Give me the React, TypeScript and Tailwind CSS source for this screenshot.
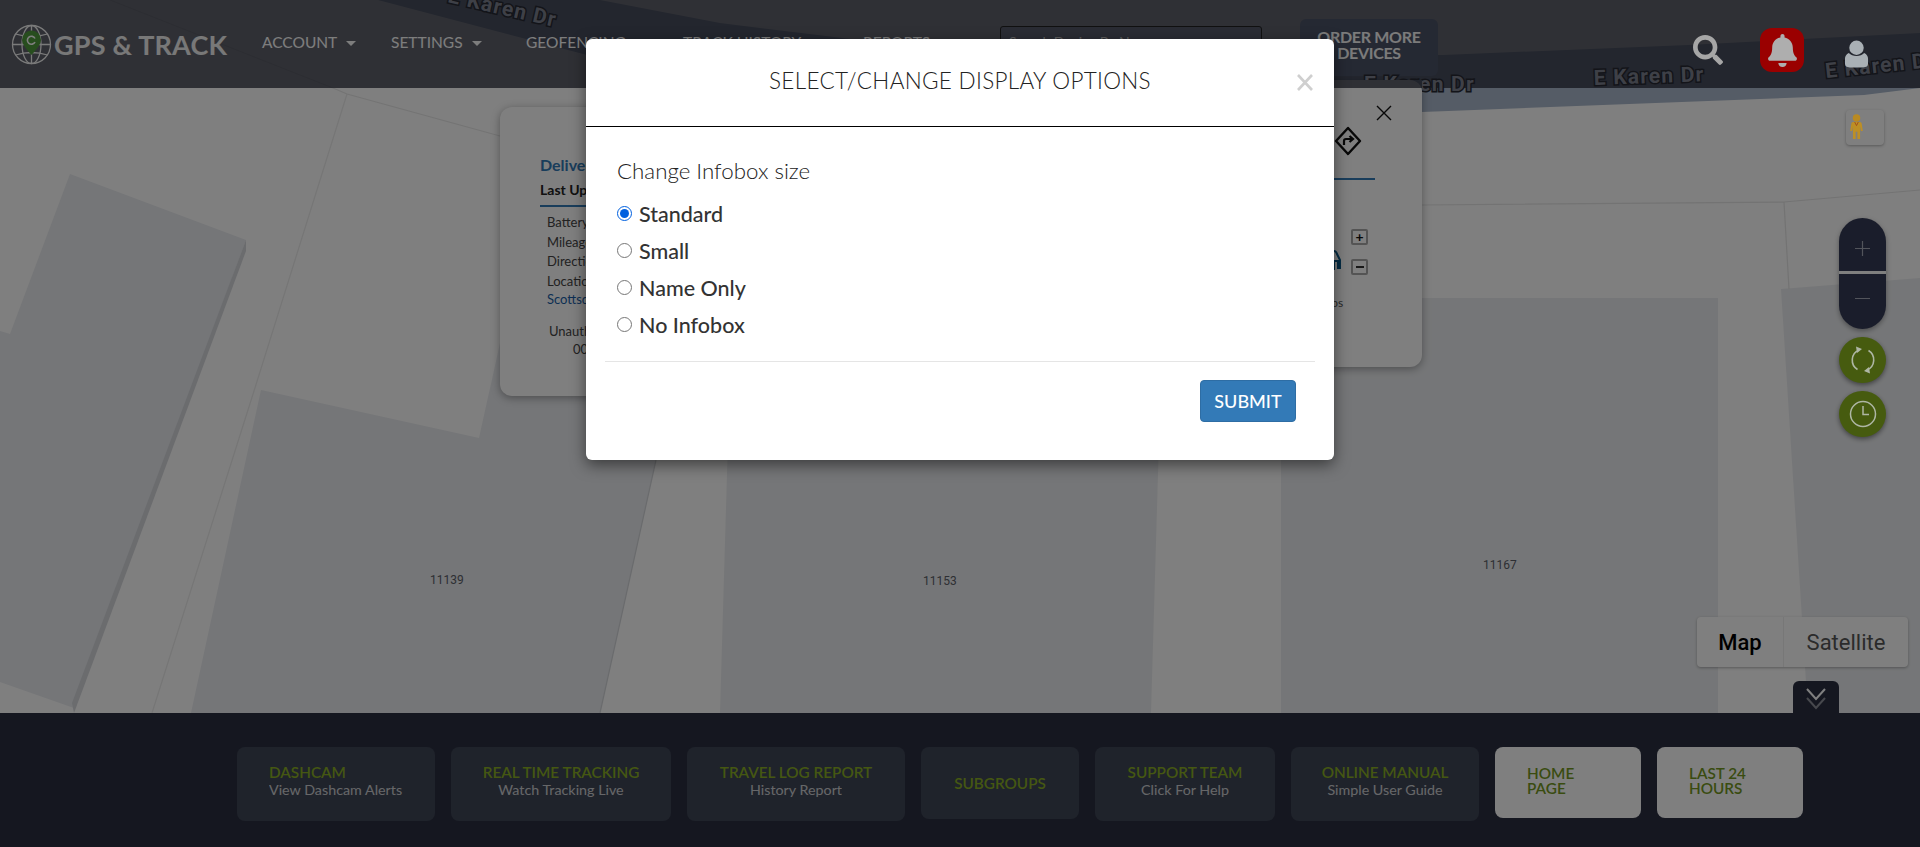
import React from "react";
import { FaSearch, FaBell } from "react-icons/fa";

const roadLabel = "fill-[#7d818f] text-[21px] font-bold tracking-[1.2px] [paint-order:stroke] [stroke:#262933] [stroke-width:3px]";

function MapCanvas() {
  return (
    <svg className="absolute inset-0 w-full h-full" viewBox="0 0 1920 713" preserveAspectRatio="none">
      <rect width="1920" height="713" fill="#fefefe" />
      <path d="M378 0 L587 55 L800 100 L1000 118 L1422 112 L1864 95 L1920 88 L1920 33 L1688 45 L1443 55 L1200 58 L900 45 L720 23 L600 0 Z" fill="#aab8cc" />
      <path d="M70 174 L246 240 L74 708 L0 682 L0 331 L10 334 Z" fill="#eaecf0" />
      <path d="M246 240 L246 251 L74 713 L72 703 Z" fill="#d6d8dd" />
      <path d="M261 390 L479 438 L500 343 L682 343 L600 713 L191 713 Z" fill="#eaecf0" />
      <path d="M728 440 L1159 440 L1151 713 L720 713 Z" fill="#ebedf0" />
      <path d="M1281 298 L1718 298 L1718 713 L1281 713 Z" fill="#ebedf0" />
      <path d="M1781 289 L1920 278 L1920 713 L1808 713 Z" fill="#ebedf0" />
      <path d="M110 0 L333 88 L347 94 L500 136" fill="none" stroke="#e8e8e8" strokeWidth="1.2" />
      <path d="M347 94 L254 391 L152 713" fill="none" stroke="#ececec" strokeWidth="1.2" />
      <path d="M656 460 L600 713" fill="none" stroke="#d4d6da" strokeWidth="1.2" />
      <path d="M1421 205 L1784 202 L1920 190 M1784 202 L1789 289" fill="none" stroke="#e6e6e6" strokeWidth="1.2" />
      <g className="fill-[#5c5f68] text-[12px]" style={{ fontFamily: "Roboto, sans-serif" }}>
        <text x="430" y="584">11139</text>
        <text x="923" y="585">11153</text>
        <text x="1483" y="569">11167</text>
      </g>
    </svg>
  );
}

function RoadLabels() {
  return (
    <svg className="absolute top-0 left-0" width="1920" height="120" viewBox="0 0 1920 120" style={{ fontFamily: "Roboto, sans-serif" }}>
      <defs>
        <clipPath id="labels-clip">
          <path clipRule="evenodd" d="M0 0 H1920 V120 H0 Z M1060 80 H1422 V120 H1060 Z" />
        </clipPath>
      </defs>
      <g clipPath="url(#labels-clip)">
        <text x="447" y="2" transform="rotate(13 447 2)" className={roadLabel}>E Karen Dr</text>
        <text x="1364" y="91" className={roadLabel}>E Karen Dr</text>
        <text x="1594" y="85" transform="rotate(-2 1594 85)" className={roadLabel}>E Karen Dr</text>
        <text x="1826" y="78" transform="rotate(-6 1826 78)" className={roadLabel}>E Karen Dr</text>
      </g>
    </svg>
  );
}

function LeftPanel() {
  return (
    <div className="absolute left-[500px] top-[107px] w-[320px] h-[289px] bg-[#fefefe] rounded-xl shadow-[0_2px_8px_rgba(0,0,0,0.35)] pl-10 pt-[47px] font-['Lato',sans-serif]">
      <div className="text-[16px] leading-[22px] font-bold text-[#337ab7]">Delivery Van 12</div>
      <div className="w-[200px] mt-[4px] pb-[5px] text-[14px] leading-[20px] font-bold text-[#222] border-b-2 border-[#337ab7]">Last Updated</div>
      <div className="pl-[7px] pt-[6px] text-[13px] text-[#444]">
        <div className="leading-[19.6px]">Battery</div>
        <div className="leading-[19.6px]">Mileage</div>
        <div className="leading-[19.6px]">Direction</div>
        <div className="leading-[19.6px]">Location</div>
        <div className="leading-[16px] text-[#1a5fa8]">Scottsdale</div>
      </div>
      <div className="pl-[9px] pt-[15px] text-[13px] leading-[18px] text-[#444]">
        <div>Unauthorized</div>
        <div className="pl-[24px]">00</div>
      </div>
    </div>
  );
}

function RightPanel() {
  return (
    <div className="absolute left-[1060px] top-[80px] w-[362px] h-[287px] bg-[#fefefe] rounded-xl shadow-[0_2px_8px_rgba(0,0,0,0.35)] font-['Lato',sans-serif]">
      <svg className="absolute left-[316px] top-[25px]" width="16" height="16" viewBox="0 0 16 16">
        <path d="M1 1 L15 15 M15 1 L1 15" stroke="#111" strokeWidth="1.4" fill="none" />
      </svg>
      <svg className="absolute left-[274px] top-[46px]" width="28" height="30" viewBox="0 0 28 30">
        <path d="M14 2 L26 15 L14 28 L2 15 Z" stroke="#111" strokeWidth="2.4" fill="none" strokeLinejoin="round" />
        <path d="M10 19 V15 Q10 13 12 13 H18 M15.5 10 L19 13 L15.5 16" stroke="#111" strokeWidth="2.2" fill="none" />
      </svg>
      <div className="absolute left-[230px] top-[98px] w-[85px] h-[2px] bg-[#337ab7]" />
      <svg className="absolute left-[260px] top-[168px]" width="24" height="24" viewBox="0 0 24 24">
        <path d="M8 3 H14 Q16 3 17 6 L20 12 V20 H18 V13 H14 V21 H8 Z" stroke="#0b5a8a" strokeWidth="2" fill="none" />
      </svg>
      <div className="absolute left-[291px] top-[149px] w-[17px] h-[16px] border-2 border-[#a8a8a8] rounded-[2px] flex items-center justify-center text-[#111] text-[14px] leading-none font-bold">+</div>
      <div className="absolute left-[291px] top-[179px] w-[17px] h-[16px] border-2 border-[#a8a8a8] rounded-[2px] flex items-center justify-center"><span className="block w-[8px] h-[2px] bg-[#333]" /></div>
      <div className="absolute left-[254px] top-[215px] text-[12px] leading-4 text-[#555]">Stops</div>
    </div>
  );
}

function Controls() {
  return (
    <>
      <div className="absolute left-[1846px] top-[110px] w-[38px] h-[35px] bg-white rounded-sm shadow-[0_1px_3px_rgba(0,0,0,0.3)] pl-[3px] pt-[4px]">
        <svg className="relative z-10" width="15" height="25" viewBox="0 0 14 28">
          <circle cx="7" cy="4.5" r="4.2" fill="#b98a22" />
          <path d="M3 9 H11 Q13 9 13 12 L14 19 H12 L11 14 V28 H8 V20 H6 V28 H3 V14 L2 19 H0 L1 12 Q1 9 3 9 Z" fill="#bd8f24" />
          <path d="M5 9 L7 13 L9 9" fill="none" stroke="#a04a1c" strokeWidth="1" />
        </svg>
      </div>
      <div className="absolute left-[1839px] top-[218px] w-[47px] h-[111px] rounded-full bg-[#343a56] shadow-[0_2px_5px_rgba(0,0,0,0.35)] flex flex-col overflow-hidden">
        <div className="h-[53px] flex items-center justify-center pt-[8px]">
          <svg width="15" height="15" viewBox="0 0 15 15"><path d="M7.5 0 V15 M0 7.5 H15" stroke="#a4a8b6" strokeWidth="1.2" /></svg>
        </div>
        <div className="h-[3px] bg-[#fefefe]" />
        <div className="flex-1 flex items-center justify-center pb-[6px]">
          <svg width="15" height="3" viewBox="0 0 15 3"><path d="M0 1.5 H15" stroke="#a4a8b6" strokeWidth="1.2" /></svg>
        </div>
      </div>
      <div className="absolute left-[1839px] top-[337px] w-[47px] h-[46px] rounded-full bg-[#8cb61e] shadow-[0_2px_5px_rgba(0,0,0,0.45)] flex items-center justify-center">
        <svg className="relative z-10" width="30" height="30" viewBox="0 0 30 30" fill="none">
          <path d="M11 5 A11 11 0 0 0 9.5 24.5" stroke="#aeb6a4" strokeWidth="1.6" />
          <path d="M19 25 A11 11 0 0 0 20.5 5.5" stroke="#aeb6a4" strokeWidth="1.6" />
          <path d="M8 1.5 L14 4 L9 8 Z M22 28.5 L16 26 L21 22 Z" fill="#aeb6a4" />
        </svg>
      </div>
      <div className="absolute left-[1839px] top-[391px] w-[47px] h-[46px] rounded-full bg-[#8cb61e] shadow-[0_2px_5px_rgba(0,0,0,0.45)] flex items-center justify-center">
        <svg className="relative z-10" width="28" height="28" viewBox="0 0 28 28" fill="none">
          <circle cx="14" cy="14" r="12.5" stroke="#aeb6a4" strokeWidth="1.5" />
          <path d="M14 6 V14.5 H20" stroke="#aeb6a4" strokeWidth="1.5" />
        </svg>
      </div>
      <div className="absolute left-[1697px] top-[617px] w-[211px] h-[50px] bg-white rounded-sm shadow-[0_1px_3px_rgba(0,0,0,0.3)] flex font-['Roboto',sans-serif] text-[22px]">
        <div className="w-[87px] flex items-center justify-center font-medium text-black border-r border-[#eee]">Map</div>
        <div className="flex-1 flex items-center justify-center text-[#565656]">Satellite</div>
      </div>
      <div className="absolute left-[1793px] top-[681px] w-[46px] h-[32px] bg-[#2a2f40] rounded-t-md flex justify-center pt-[7px]">
        <svg width="22" height="22" viewBox="0 0 22 22" fill="none">
          <path d="M2 10 L11 20 L20 10" stroke="#8e919a" strokeWidth="2" />
          <path d="M2 1 L11 11 L20 1" stroke="#fff" strokeWidth="2" />
        </svg>
      </div>
    </>
  );
}

function Logo() {
  return (
    <div className="flex items-center ml-[11px] w-[241px]">
      <svg width="41" height="41" viewBox="0 0 41 41" fill="none" stroke="#f5f5f5" strokeWidth="1.3">
        <circle cx="20.5" cy="20.5" r="19" />
        <ellipse cx="20.5" cy="20.5" rx="9.5" ry="19" />
        <path d="M20.5 1.5 V39.5 M1.5 20.5 H39.5 M4.5 10 Q20.5 15 36.5 10 M4.5 31 Q20.5 26 36.5 31" />
        <path d="M20.5 31 Q11 21 11 16 A9.5 9.5 0 0 1 30 16 Q30 21 20.5 31 Z" fill="#4f9a3c" stroke="none" />
        <path d="M24 14.5 A4 4 0 1 0 24 18" stroke="#ffffff" strokeWidth="1.6" />
      </svg>
      <span className="ml-[2px] text-[27px] leading-none font-bold font-['Lato',sans-serif] text-[#f0f0f0] tracking-[0.2px] whitespace-nowrap">GPS &amp; TRACK</span>
    </div>
  );
}

function NavItem({ label, caret, w }: { label: string; caret?: boolean; w: string }) {
  return (
    <div className={`flex items-center shrink-0 ${w} text-[15.5px] text-[#fbfbfb] whitespace-nowrap pb-[2px]`}>
      <span>{label}</span>
      {caret && <span className="ml-[9px] w-0 h-0 border-x-[5px] border-x-transparent border-t-[5px] border-t-[#fbfbfb]" />}
    </div>
  );
}

function Header() {
  return (
    <header className="absolute top-0 inset-x-0 h-[88px] bg-[#1e212f]/[0.71] flex items-center font-['Lato',sans-serif]">
      <Logo />
      <div className="flex items-center ml-[10px]">
        <NavItem label="ACCOUNT" caret w="w-[129px]" />
        <NavItem label="SETTINGS" caret w="w-[135px]" />
        <NavItem label="GEOFENCING" w="w-[157px]" />
        <NavItem label="TRACK HISTORY" w="w-[180px]" />
        <NavItem label="REPORTS" w="w-[137px]" />
      </div>
      <div className="w-[262px] h-[42px] mt-[5px] border border-[#222] rounded-[3px] bg-[#555969] flex items-center px-2 pb-[10px] text-[14px] text-[#bbb] shrink-0">Search Device By Name</div>
      <div className="ml-[38px] w-[138px] h-[57px] mt-[7px] pb-[6px] rounded-md bg-[#4b5266] flex flex-col items-center justify-center text-[16px] leading-[16px] font-bold text-[#f6f6f6] tracking-[-0.3px] shrink-0">
        <span>ORDER MORE</span>
        <span>DEVICES</span>
      </div>
      <FaSearch className="relative z-10 ml-[255px] mt-[12px] shrink-0 text-[#a6a6a6]" size={30} />
      <div className="relative z-10 ml-[37px] mt-[12px] w-[44px] h-[44px] rounded-xl bg-[#9a0000] flex items-center justify-center shrink-0">
        <FaBell className="text-[#aeaeae]" size={33} />
      </div>
      <svg className="relative z-10 ml-[40px] mt-[19px] shrink-0" width="25" height="28" viewBox="0 0 26 28">
        <circle cx="13" cy="7.5" r="7.5" fill="#a9b0b5" />
        <path d="M5 13 Q8 16 13 16 Q18 16 21 13 Q25 15 25 19 V24 Q25 28 20 28 H6 Q1 28 1 24 V19 Q1 15 5 13 Z" fill="#a9b0b5" />
      </svg>
    </header>
  );
}

function Tile({ title, sub, w, h, align, light }: { title: React.ReactNode; sub?: string; w: string; h: string; align?: string; light?: boolean }) {
  return (
    <div className={`${w} ${h} shrink-0 rounded-lg flex flex-col justify-center px-8 ${sub ? "pb-[7px]" : ""} ${light ? "pb-[4px]" : ""} ${align ?? "items-center text-center"} ${light ? "bg-white text-[#74981f]" : "bg-[#3f4656] text-[#8aaf24]"}`}>
      <div className={`text-[15.3px] font-semibold whitespace-nowrap ${light ? "leading-[15px]" : "leading-[17px]"}`}>{title}</div>
      {sub && <div className="text-[14.3px] leading-[17px] text-[#fdfdfd] opacity-75 whitespace-nowrap">{sub}</div>}
    </div>
  );
}

function Footer() {
  return (
    <footer className="h-[134px] shrink-0 bg-[#2a2f40] flex justify-start items-start pt-[34px] pl-[237px] gap-4 font-['Lato',sans-serif]">
      <Tile title="DASHCAM" sub="View Dashcam Alerts" w="w-[198px]" h="h-[74px]" align="items-start text-left" />
      <Tile title="REAL TIME TRACKING" sub="Watch Tracking Live" w="w-[220px]" h="h-[74px]" />
      <Tile title="TRAVEL LOG REPORT" sub="History Report" w="w-[218px]" h="h-[74px]" />
      <Tile title="SUBGROUPS" w="w-[158px]" h="h-[72px]" />
      <Tile title="SUPPORT TEAM" sub="Click For Help" w="w-[180px]" h="h-[74px]" />
      <Tile title="ONLINE MANUAL" sub="Simple User Guide" w="w-[188px]" h="h-[74px]" />
      <Tile title={<>HOME<br />PAGE</>} w="w-[146px]" h="h-[71px]" align="items-start text-left" light />
      <Tile title={<>LAST 24<br />HOURS</>} w="w-[146px]" h="h-[71px]" align="items-start text-left" light />
    </footer>
  );
}

function RadioRow({ label, checked }: { label: string; checked?: boolean }) {
  return (
    <label className="flex items-center h-[37px] text-[21.5px] font-medium text-[#333]">
      <input type="radio" name="infobox" defaultChecked={checked} className="w-[15px] h-[15px] m-0 mr-[7px] -mt-[2px] accent-[#0060df]" />
      <span>{label}</span>
    </label>
  );
}

function Modal() {
  return (
    <div className="absolute inset-0 bg-black/50 flex justify-center items-start pt-[39px]">
      <div className="w-[748px] h-[421px] bg-white rounded-md shadow-[0_5px_15px_rgba(0,0,0,0.5)] flex flex-col font-['Lato',sans-serif]">
        <div className="h-[88px] shrink-0 border-b border-black relative flex items-center justify-center pb-[4px]">
          <h4 className="text-[22.5px] font-light text-[#222] tracking-[0.3px]">SELECT/CHANGE DISPLAY OPTIONS</h4>
          <svg className="absolute right-[21px] top-[35px]" width="16" height="17" viewBox="0 0 16 17">
            <path d="M1 1 L15 16 M15 1 L1 16" stroke="#cfcfcf" strokeWidth="2.6" fill="none" />
          </svg>
        </div>
        <div className="pl-[31px] pr-8 pt-[30px] flex-1 flex flex-col">
          <div className="text-[22.3px] leading-[28px] font-light text-[#222]">Change Infobox size</div>
          <div className="mt-[11px]">
            <RadioRow label="Standard" checked />
            <RadioRow label="Small" />
            <RadioRow label="Name Only" />
            <RadioRow label="No Infobox" />
          </div>
        </div>
        <div className="mx-[19px] border-t border-[#e5e5e5] h-[99px] shrink-0 flex justify-end pt-[18px] pr-[19px]">
          <button className="w-[96px] h-[42px] rounded bg-[#337ab7] border border-[#2e6da4] text-white text-[18px] font-medium">SUBMIT</button>
        </div>
      </div>
    </div>
  );
}

export default function App() {
  return (
    <div className="relative w-[1920px] h-[847px] overflow-hidden flex flex-col">
      <div className="relative h-[713px] shrink-0">
        <MapCanvas />
        <LeftPanel />
        <RightPanel />
        <Controls />
      </div>
      <Header />
      <RoadLabels />
      <Footer />
      <Modal />
    </div>
  );
}
